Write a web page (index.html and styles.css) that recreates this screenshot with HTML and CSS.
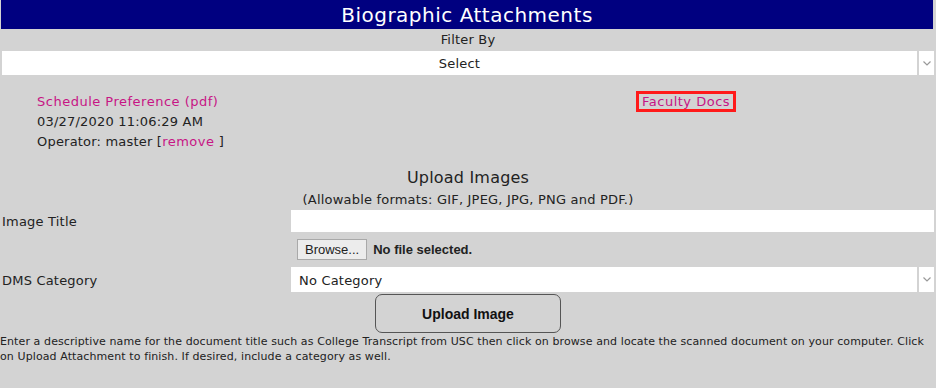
FILE: index.html
```html
<!DOCTYPE html>
<html>
<head>
<meta charset="utf-8">
<link rel="stylesheet" href="styles.css">
</head>
<body>
<div class="page">
  <h1 class="title">Biographic Attachments</h1>
  <div class="filter-label">Filter By</div>
  <div class="select wide">
    <span class="select-text center">Select</span>
    <span class="select-arrow"><svg width="8" height="5" viewBox="0 0 8 5"><path d="M0.5 0.5 L4 4 L7.5 0.5" fill="none" stroke="#999" stroke-width="1.2"/></svg></span>
  </div>

  <div class="attachments">
    <div class="att-info">
      <a class="link">Schedule Preference (pdf)</a>
      <div>03/27/2020 11:06:29 AM</div>
      <div>Operator: master [<a class="link">remove</a> ]</div>
    </div>
    <div class="att-cat"><a class="link boxed">Faculty Docs</a></div>
  </div>

  <div class="upload-head">Upload Images</div>
  <div class="formats">(Allowable formats: GIF, JPEG, JPG, PNG and PDF.)</div>

  <div class="form">
    <label class="lbl lbl-title">Image Title</label>
    <div class="input"></div>
    <div></div>
    <div class="file-row"><span class="browse">Browse...</span><span class="nofile">No file selected.</span></div>
    <label class="lbl lbl-dms">DMS Category</label>
    <div class="select">
      <span class="select-text">No Category</span>
      <span class="select-arrow"><svg width="8" height="5" viewBox="0 0 8 5"><path d="M0.5 0.5 L4 4 L7.5 0.5" fill="none" stroke="#999" stroke-width="1.2"/></svg></span>
    </div>
  </div>
  <div class="btn-row"><button class="upload-btn">Upload Image</button></div>
  <p class="help">Enter a descriptive name for the document title such as College Transcript from USC then click on browse and locate the scanned document on your computer. Click on Upload Attachment to finish. If desired, include a category as well.</p>
</div>
</body>
</html>
```
FILE: styles.css
```css
html, body {
  margin: 0;
  padding: 0;
  background: #d3d3d3;
}
body {
  font-family: "DejaVu Sans", sans-serif;
  color: #222;
  font-size: 13px;
  letter-spacing: 0.2px;
}
.page {
  padding: 0 2px;
}
.title {
  margin: 0 1px 0 -1px;
  background: #000080;
  color: #fff;
  font-weight: normal;
  font-size: 20px;
  letter-spacing: 0.5px;
  height: 29px;
  line-height: 31px;
  text-align: center;
}
.filter-label {
  text-align: center;
  height: 22px;
  line-height: 22px;
}
.select {
  display: flex;
  background: #fff;
  height: 24px;
  align-items: stretch;
}
.select-text {
  flex: 1;
  line-height: 26px;
  padding-left: 8px;
}
.select-text.center {
  text-align: center;
  padding-left: 0;
}
.select-arrow {
  width: 15px;
  border-left: 2px solid #d3d3d3;
  display: flex;
  align-items: center;
  justify-content: center;
}
.attachments {
  display: flex;
  padding-top: 17px;
  height: 71px;
}
.att-info {
  flex: 0 0 634px;
  box-sizing: border-box;
  padding-left: 35px;
  line-height: 20px;
}
.link {
  color: #c71585;
  letter-spacing: 0.5px;
}
.boxed {
  display: inline-block;
  border: 3px solid #ff1a1a;
  padding: 0 3px 0 3px;
  line-height: 15px;
  margin-top: -1px;
}
.upload-head {
  text-align: center;
  font-size: 16px;
  line-height: 20px;
  padding-top: 5px;
}
.formats {
  text-align: center;
  line-height: 18px;
  margin-top: 3px;
}
.form {
  display: grid;
  grid-template-columns: 289px 1fr;
  row-gap: 5px;
  margin-top: 1px;
}
.lbl-title {
  line-height: 24px;
  margin-bottom: -2px;
}
.lbl-dms {
  line-height: 30px;
  margin-bottom: -4px;
}
.input {
  background: #fff;
  height: 22px;
}
.file-row {
  display: flex;
  align-items: center;
  padding-left: 6px;
  gap: 6px;
  height: 24px;
}
.browse {
  font-family: "Liberation Sans", Arial, sans-serif;
  font-size: 13px;
  letter-spacing: 0;
  border: 1px solid #a9a9a9;
  background: #ececec;
  padding: 2px 7px;
  line-height: 15px;
}
.nofile {
  font-family: "Liberation Sans", Arial, sans-serif;
  font-weight: bold;
  font-size: 13px;
  letter-spacing: 0;
}
.form .select {
  height: 25px;
  margin-top: 1px;
}
.form .select .select-text {
  line-height: 27px;
}
.btn-row {
  padding-left: 373px;
  margin-top: 2px;
}
.upload-btn {
  width: 186px;
  height: 39px;
  border: 1px solid #555;
  border-radius: 7px;
  background: #d3d3d3;
  font-family: "Liberation Sans", Arial, sans-serif;
  font-weight: bold;
  font-size: 14px;
  color: #111;
}
.help {
  margin: 1px 0 0 -2px;
  font-size: 11px;
  line-height: 15px;
  letter-spacing: 0.1px;
}
```
